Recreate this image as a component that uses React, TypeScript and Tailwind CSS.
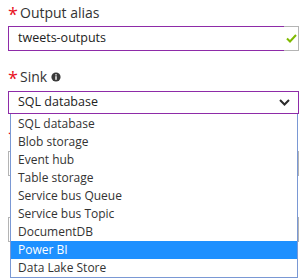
import React from "react";

const items = [
  "SQL database",
  "Blob storage",
  "Event hub",
  "Table storage",
  "Service bus Queue",
  "Service bus Topic",
  "DocumentDB",
  "Power BI",
  "Data Lake Store",
];

function Label({ text, required = true, info = false, className = "" }: { text: string; required?: boolean; info?: boolean; className?: string }) {
  return (
    <div className={`flex h-[18px] items-center text-[14px] leading-[18px] text-[#333] ${className}`}>
      {required ? (
        <span className="mr-[5px] w-[7px] text-[18px] leading-none text-[#e81123] translate-y-[1px]">*</span>
      ) : null}
      {text ? <span>{text}</span> : null}
      {info ? (
        <svg className="ml-[4px]" width="10" height="10" viewBox="0 0 10 10">
          <circle cx="5" cy="5" r="4.6" fill="#3a3a3a" />
          <rect x="4.3" y="4.2" width="1.4" height="3.6" fill="#fff" />
          <rect x="4.3" y="2.2" width="1.4" height="1.3" fill="#fff" />
        </svg>
      ) : null}
    </div>
  );
}

export default function App() {
  return (
    <div className="relative h-[280px] w-[307px] overflow-hidden bg-white font-['Open_Sans','Noto_Sans',sans-serif]">
      <div className="flex flex-col px-2 pt-1">
        <Label text="Output alias" />
        <div className="mt-1 flex h-[25px]">
          <div className="flex flex-1 items-center border border-r-0 border-[#8e2ba8] pl-[9px] text-[12.5px] text-[#222]">
            tweets-outputs
          </div>
          <div className="flex w-[15px] items-center justify-center border border-l-0 border-[#b4b4b4]">
            <svg width="11" height="9" viewBox="0 0 11 9">
              <polyline points="1,4.5 4,7.5 10,1" fill="none" stroke="#7fba00" strokeWidth="2" />
            </svg>
          </div>
        </div>

        <Label text="Sink" info className="mt-[17px]" />
        <div className="relative mt-[5px]">
          <div className="flex h-[23px] items-center justify-between border border-[#8e2ba8] pl-[9px] pr-[8px] text-[12.5px] text-[#222]">
            <span>SQL database</span>
            <svg width="11" height="7" viewBox="0 0 11 7">
              <polyline points="1,1 5.5,5.5 10,1" fill="none" stroke="#2b2b2b" strokeWidth="2" />
            </svg>
          </div>
          <ul className="absolute left-[2px] right-[1px] top-full z-10 border border-t-0 border-[#7a98d4] bg-white pt-[1px]">
            {items.map((it) => (
              <li
                key={it}
                className={`flex h-[18px] items-center pl-[7px] text-[12px] leading-[18px] ${
                  it === "Power BI" ? "bg-[#1e90ff] text-white" : "text-[#333]"
                }`}
              >
                {it}
              </li>
            ))}
          </ul>
        </div>

        <Label text="" className="mt-[13px]" />
        <div className="mt-[6px] h-[25px] border border-[#b4b4b4]" />
        <Label text="" required={false} className="mt-[20px]" />
        <div className="mt-[3px] h-[25px] border border-[#b4b4b4]" />
      </div>
    </div>
  );
}
